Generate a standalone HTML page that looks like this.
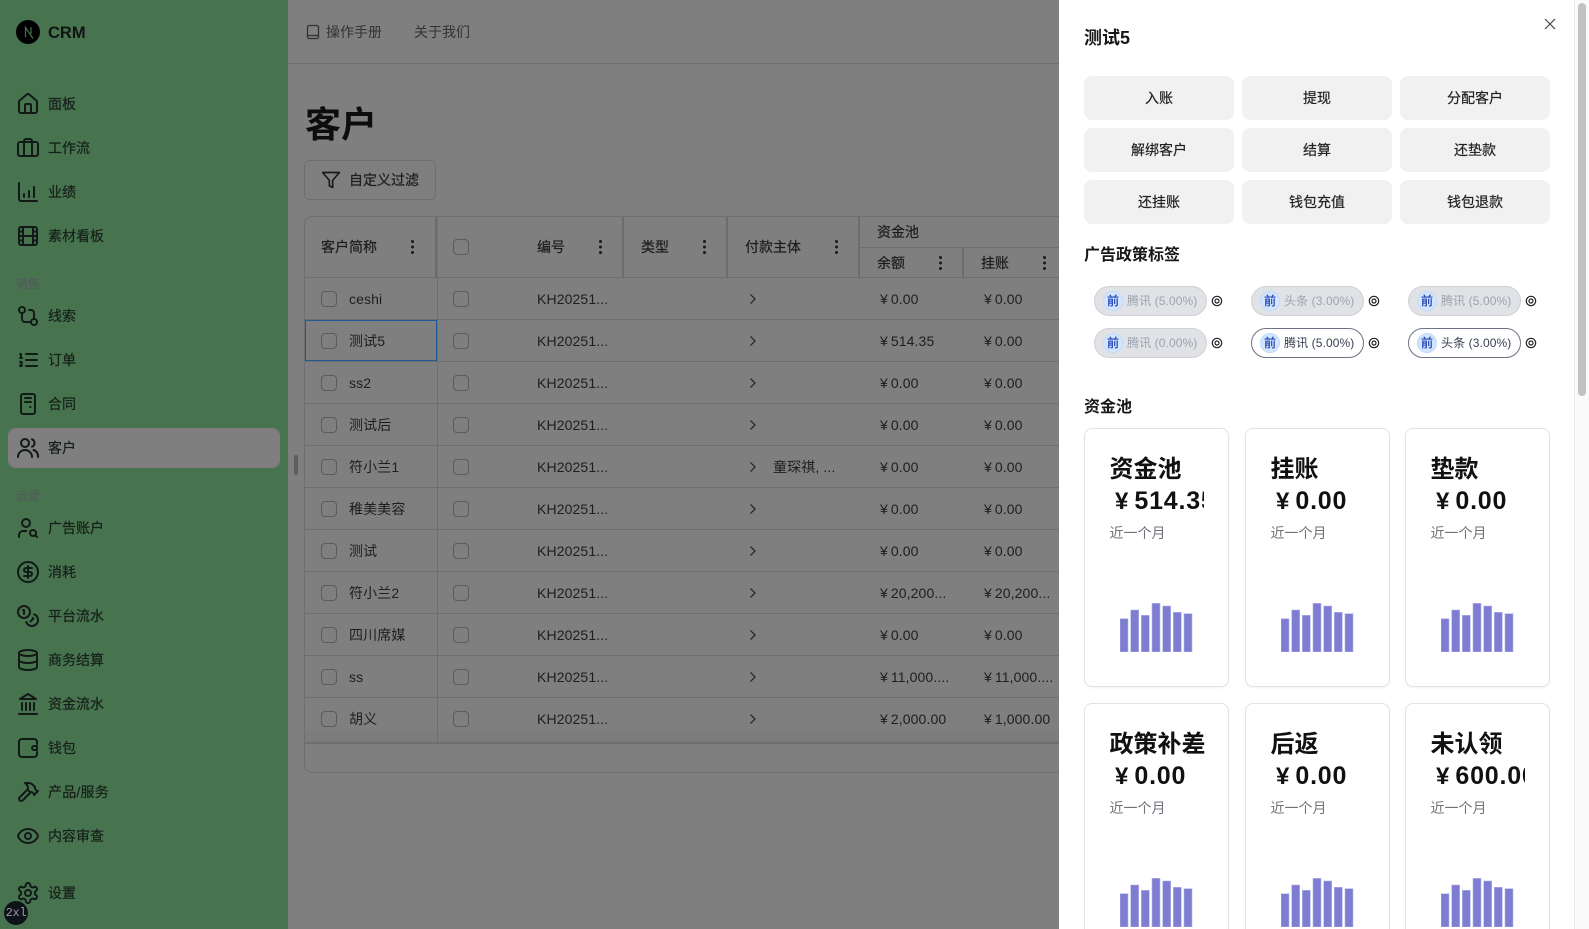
<!DOCTYPE html>
<html lang="zh"><head><meta charset="utf-8"><title>CRM</title>
<style>
*{box-sizing:border-box}
html,body{margin:0;padding:0;width:1589px;height:929px;overflow:hidden;background:#7f7f7f}
body{font-family:"Liberation Sans","Noto Sans CJK SC",sans-serif;position:relative;color:#1c1c1c;font-size:14px}
.a{position:absolute;white-space:nowrap}
.nav{position:absolute;left:48px;font-size:14px;line-height:20px;color:#15201a;-webkit-text-stroke:.2px currentColor;white-space:nowrap}
.ic{position:absolute;left:16px;width:24px;height:24px;fill:none;stroke:#121a18;stroke-width:2;stroke-linecap:round;stroke-linejoin:round}
.lb{position:absolute;left:16px;font-size:12px;line-height:16px;color:#4f5a5a}
.h{position:absolute;background:#6c6c6c}
.hl{position:absolute;left:305px;width:754px;height:1px;background:#6e6e6e}
.th{position:absolute;font-size:14px;line-height:20px;-webkit-text-stroke:.2px currentColor;color:#1c1c1c;white-space:nowrap}
.k{position:absolute;width:3px;height:14px;background:radial-gradient(circle at 1.5px 1.5px,#1c1c1c 1.4px,transparent 1.6px) 0 0/3px 5.5px}
.cb{position:absolute;width:16px;height:16px;border:1px solid #5c5c5c;border-radius:4px}
.t{position:absolute;font-size:14px;line-height:20px;color:#1e1e1e;white-space:nowrap;letter-spacing:.12px}
.ch{position:absolute;left:749px;width:8px;height:12px;fill:none;stroke:#1e1e1e;stroke-width:1.2}
#dr{position:absolute;left:1059px;top:0;width:530px;height:929px;background:#fff;overflow:hidden}
.btn{position:absolute;width:150px;height:44px;background:#f1f1f1;border-radius:8px;text-align:center;line-height:44px;font-size:14px;-webkit-text-stroke:.2px currentColor;color:#222}
.sec{position:absolute;left:25px;font-size:16px;line-height:24px;font-weight:700;color:#18181b}
.chip{position:absolute;width:113px;height:30px;border-radius:15px;border:1px solid #cfd1d6;background:#e1e2e6;font-size:12px;line-height:28px;color:#9ca3af;padding-left:32px;white-space:nowrap;letter-spacing:.1px}
.chip.on{background:#fff;border-color:#6b7280;color:#374151}
.chip i{position:absolute;left:8px;top:4px;width:20px;height:20px;border-radius:50%;background:#d3e4fd;border:1px solid #bfdbfe;color:#1e40af;font-style:normal;text-align:center;line-height:18px;font-size:12px;-webkit-text-stroke:.25px currentColor;letter-spacing:0}
.tg{position:absolute;width:12px;height:12px;fill:none;stroke:#222;stroke-width:1.2}
.card{position:absolute;width:145px;height:259px;border:1px solid #e2e2e2;border-radius:8px;background:#fff;box-shadow:0 1px 2px rgba(0,0,0,.05)}
.ct{position:absolute;left:24.5px;top:25px;font-size:24px;line-height:32px;font-weight:700;color:#111;white-space:nowrap}
.cv{position:absolute;left:25px;top:56px;width:94px;overflow:hidden;font-size:25px;line-height:32px;font-weight:700;color:#111;white-space:nowrap;padding-left:5px;letter-spacing:.8px}
.cv b{font-size:24px;font-weight:700;margin-right:6px;letter-spacing:0}
.cs{position:absolute;left:24.5px;top:94px;font-size:14px;line-height:20px;color:#71717a;white-space:nowrap}
.bars{position:absolute;top:173px;width:73px;height:50px}
</style></head><body>
<svg width="0" height="0" style="position:absolute"><defs>
<symbol id="br" viewBox="0 0 73 50"><g fill="#7d7dd2" stroke="#b4b4e8" stroke-width=".6"><rect x="0" y="16.7" width="8" height="33.3"/><rect x="10.7" y="8" width="8" height="42"/><rect x="21.3" y="13.3" width="8" height="36.7"/><rect x="32" y="1.3" width="8" height="48.7"/><rect x="42.7" y="4" width="8" height="46"/><rect x="53.3" y="10.3" width="8" height="39.7"/><rect x="64" y="11.7" width="8" height="38.3"/></g></symbol>
<symbol id="tg" viewBox="0 0 12 12"><circle cx="6" cy="6" r="4.7"/><circle cx="6" cy="6" r="2"/></symbol>
</defs></svg>

<!-- sidebar -->
<div class="a" style="left:0;top:0;width:288px;height:929px;background:#48734f"></div>
<div class="a" style="left:16px;top:20px;width:24px;height:24px;border-radius:50%;background:#000"></div>
<svg class="a" style="left:16px;top:20px" width="24" height="24" fill="none" stroke="#48734f" stroke-width="1.2"><path d="M9.500 17V7.500L17 18.500M15 7v7"/></svg>
<div class="a" style="left:48px;top:22px;font-size:16.500px;line-height:22px;font-weight:700;color:#101512">CRM</div>
<div class="a" style="left:8px;top:428px;width:272px;height:40px;border-radius:8px;background:#7f7f7f"></div>

<svg class="ic" style="top:92px" viewBox="0 0 24 24"><path d="M15 21v-8a1 1 0 0 0-1-1h-4a1 1 0 0 0-1 1v8"/><path d="M3 10a2 2 0 0 1 .709-1.528l7-5.999a2 2 0 0 1 2.582 0l7 5.999A2 2 0 0 1 21 10v9a2 2 0 0 1-2 2H5a2 2 0 0 1-2-2z"/></svg><div class="nav" style="top:94px">面板</div>
<svg class="ic" style="top:136px" viewBox="0 0 24 24"><path d="M16 20V5a2 2 0 0 0-2-2h-4a2 2 0 0 0-2 2v15"/><rect width="20" height="14" x="2" y="6" rx="2"/></svg><div class="nav" style="top:138px">工作流</div>
<svg class="ic" style="top:180px" viewBox="0 0 24 24"><path d="M3 3v16a2 2 0 0 0 2 2h16"/><path d="M18 17V7"/><path d="M13 17v-6"/><path d="M8 17v-3"/></svg><div class="nav" style="top:182px">业绩</div>
<svg class="ic" style="top:224px" viewBox="0 0 24 24"><rect width="18" height="18" x="3" y="3" rx="2"/><path d="M7 3v18"/><path d="M3 7.500h4"/><path d="M3 12h18"/><path d="M3 16.500h4"/><path d="M17 3v18"/><path d="M17 7.500h4"/><path d="M17 16.500h4"/></svg><div class="nav" style="top:226px">素材看板</div>
<div class="lb" style="top:276px">销售</div>
<svg class="ic" style="top:304px" viewBox="0 0 24 24"><circle cx="6" cy="6" r="3"/><circle cx="18" cy="18" r="3"/><path d="M6 9v6a3 3 0 0 0 3 3h6"/><path d="M13 6h2a3 3 0 0 1 3 3v6"/></svg><div class="nav" style="top:306px">线索</div>
<svg class="ic" style="top:348px" viewBox="0 0 24 24"><path d="M10 12h11"/><path d="M10 18h11"/><path d="M10 6h11"/><path d="M4 10h2"/><path d="M4 6h1v4"/><path d="M6 18H4c0-1 2-2 2-3s-1-1.500-2-1"/></svg><div class="nav" style="top:350px">订单</div>
<svg class="ic" style="top:392px" viewBox="0 0 24 24"><rect x="5" y="2" width="14" height="20" rx="2"/><path d="M9 6h6"/><path d="M9 10h6"/><path d="M14 15h.5"/></svg><div class="nav" style="top:394px">合同</div>
<svg class="ic" style="top:436px" viewBox="0 0 24 24"><circle cx="9" cy="7" r="4"/><path d="M2 21a7 7 0 0 1 14 0"/><path d="M16 3.300a4 4 0 0 1 0 7.400"/><path d="M17.500 14a6.500 6.500 0 0 1 4.500 7"/></svg><div class="nav" style="top:438px">客户</div>
<div class="lb" style="top:488px">运营</div>
<svg class="ic" style="top:516px" viewBox="0 0 24 24"><circle cx="10" cy="7" r="4"/><path d="M10.300 15H7a4 4 0 0 0-4 4v2"/><circle cx="17" cy="17" r="3"/><path d="m21 21-1.900-1.900"/></svg><div class="nav" style="top:518px">广告账户</div>
<svg class="ic" style="top:560px" viewBox="0 0 24 24"><circle cx="12" cy="12" r="10"/><path d="M16 8h-6a2 2 0 1 0 0 4h4a2 2 0 1 1 0 4H8"/><path d="M12 18V6"/></svg><div class="nav" style="top:562px">消耗</div>
<svg class="ic" style="top:604px" viewBox="0 0 24 24"><circle cx="8" cy="8" r="6"/><path d="M18.090 10.370A6 6 0 1 1 10.340 18"/><path d="M7 6h1v4"/><path d="m16.710 13.880.7.71-2.820 2.820"/></svg><div class="nav" style="top:606px">平台流水</div>
<svg class="ic" style="top:648px" viewBox="0 0 24 24"><ellipse cx="12" cy="5" rx="9" ry="3"/><path d="M3 5V19A9 3 0 0 0 21 19V5"/><path d="M3 12A9 3 0 0 0 21 12"/></svg><div class="nav" style="top:650px">商务结算</div>
<svg class="ic" style="top:692px" viewBox="0 0 24 24"><path d="M3 22h18"/><path d="M6 18v-7"/><path d="M10 18v-7"/><path d="M14 18v-7"/><path d="M18 18v-7"/><path d="M12 2l8 5H4z"/></svg><div class="nav" style="top:694px">资金流水</div>
<svg class="ic" style="top:736px" viewBox="0 0 24 24"><path d="M21 8V6a3 3 0 0 0-3-3H6a3 3 0 0 0-3 3v12a3 3 0 0 0 3 3h12a3 3 0 0 0 3-3v-2"/><path d="M21 10h-3a2 2 0 0 0 0 4h3z"/></svg><div class="nav" style="top:738px">钱包</div>
<svg class="ic" style="top:780px" viewBox="0 0 24 24"><path d="m15 12-8.373 8.373a1 1 0 1 1-3-3L12 9"/><path d="m18 15 4-4"/><path d="m21.500 11.500-1.914-1.914A2 2 0 0 1 19 8.172V7l-2.260-2.260a6 6 0 0 0-4.202-1.756L9 2.960l.92.82A6.180 6.180 0 0 1 12 8.400V10l2 2h1.172a2 2 0 0 1 1.414.586L18.500 14.500"/></svg><div class="nav" style="top:782px;letter-spacing:.2px">产品/服务</div>
<svg class="ic" style="top:824px" viewBox="0 0 24 24"><path d="M2.062 12.348a1 1 0 0 1 0-.696 10.750 10.750 0 0 1 19.876 0 1 1 0 0 1 0 .696 10.750 10.750 0 0 1-19.876 0"/><circle cx="12" cy="12" r="3"/></svg><div class="nav" style="top:826px">内容审查</div>
<svg class="ic" style="top:881px" viewBox="0 0 24 24"><path d="M12.220 2h-.44a2 2 0 0 0-2 2v.18a2 2 0 0 1-1 1.730l-.43.25a2 2 0 0 1-2 0l-.15-.08a2 2 0 0 0-2.730.73l-.22.38a2 2 0 0 0 .73 2.730l.15.1a2 2 0 0 1 1 1.720v.51a2 2 0 0 1-1 1.740l-.15.09a2 2 0 0 0-.73 2.730l.22.38a2 2 0 0 0 2.730.73l.15-.08a2 2 0 0 1 2 0l.43.25a2 2 0 0 1 1 1.730V20a2 2 0 0 0 2 2h.44a2 2 0 0 0 2-2v-.18a2 2 0 0 1 1-1.730l.43-.25a2 2 0 0 1 2 0l.15.08a2 2 0 0 0 2.730-.73l.22-.39a2 2 0 0 0-.73-2.730l-.15-.08a2 2 0 0 1-1-1.740v-.5a2 2 0 0 1 1-1.740l.15-.09a2 2 0 0 0 .73-2.730l-.22-.38a2 2 0 0 0-2.730-.73l-.15.08a2 2 0 0 1-2 0l-.43-.25a2 2 0 0 1-1-1.730V4a2 2 0 0 0-2-2z"/><circle cx="12" cy="12" r="3"/></svg><div class="nav" style="top:883px">设置</div>
<div class="a" style="left:4px;top:901px;width:24px;height:24px;border-radius:50%;background:#10121a;color:#9a9aa0;font-family:'Liberation Mono',monospace;font-size:12px;line-height:24px;text-align:center;letter-spacing:-.3px">2xl</div>

<!-- resize handle -->
<div class="a" style="left:294px;top:455px;width:4px;height:20px;border-radius:2px;background:#5e5e5e"></div>

<!-- top bar -->
<div class="a" style="left:288px;top:63px;width:771px;height:1px;background:#6e6e6e"></div>
<svg class="a" style="left:305px;top:23px" width="18" height="18" viewBox="0 0 18 18" fill="none" stroke="#333" stroke-width="1.300" stroke-linejoin="round"><rect x="2.500" y="2.500" width="11" height="13" rx="1.500"/><path d="M2.500 12.500h11"/></svg>
<div class="a" style="left:326px;top:22px;font-size:14px;line-height:20px;color:#333">操作手册</div>
<div class="a" style="left:414px;top:22px;font-size:14px;line-height:20px;color:#333">关于我们</div>

<div class="a" style="left:305px;top:100px;font-size:36px;line-height:50px;font-weight:700;color:#0d0d0d">客户</div>

<div class="a" style="left:304px;top:160px;width:132px;height:40px;border:1px solid #6e6e6e;border-radius:6px"></div>
<svg class="a" style="left:321px;top:170px" width="20" height="20" viewBox="0 0 24 24" fill="none" stroke="#1a1a1a" stroke-width="2" stroke-linejoin="round"><polygon points="22 3 2 3 10 12.460 10 19 14 21 14 12.460 22 3"/></svg>
<div class="a" style="left:349px;top:170px;font-size:14px;line-height:20px;-webkit-text-stroke:.2px currentColor;color:#1c1c1c">自定义过滤</div>

<!-- table frame -->
<div class="a" style="left:304px;top:216px;width:770px;height:557px;border:1px solid #6e6e6e;border-radius:8px"></div>
<div class="a" style="left:305px;top:731px;width:754px;height:11px;background:#7c7c7c"></div>
<div class="hl" style="top:277px"></div>
<div class="hl" style="top:319px"></div><div class="hl" style="top:361px"></div><div class="hl" style="top:403px"></div><div class="hl" style="top:445px"></div><div class="hl" style="top:487px"></div><div class="hl" style="top:529px"></div><div class="hl" style="top:571px"></div><div class="hl" style="top:613px"></div><div class="hl" style="top:655px"></div><div class="hl" style="top:697px"></div><div class="hl" style="top:742px;height:2px"></div>
<div class="a" style="left:437px;top:277px;width:1px;height:465px;background:#6e6e6e"></div>
<!-- header dividers -->
<div class="h" style="left:434.500px;top:217px;width:2px;height:60px"></div><div class="h" style="left:436.500px;top:217px;width:1px;height:60px;background:#737373"></div>
<div class="h" style="left:622px;top:217px;width:2px;height:60px"></div>
<div class="h" style="left:726px;top:217px;width:2px;height:60px"></div>
<div class="h" style="left:858px;top:217px;width:2px;height:60px"></div>
<div class="h" style="left:962px;top:248px;width:2px;height:29px"></div>
<div class="hl" style="left:860px;width:199px;top:247px"></div>
<div class="th" style="left:321px;top:237px">客户简称</div><div class="k" style="left:411px;top:240px"></div>
<div class="cb" style="left:453px;top:239px"></div>
<div class="th" style="left:537px;top:237px">编号</div><div class="k" style="left:599px;top:240px"></div>
<div class="th" style="left:641px;top:237px">类型</div><div class="k" style="left:703px;top:240px"></div>
<div class="th" style="left:745px;top:237px">付款主体</div><div class="k" style="left:835px;top:240px"></div>
<div class="th" style="left:877px;top:222px">资金池</div>
<div class="th" style="left:877px;top:253px">余额</div><div class="k" style="left:939px;top:256px"></div>
<div class="th" style="left:981px;top:253px">挂账</div><div class="k" style="left:1043px;top:256px"></div>
<!-- selected cell -->
<div class="a" style="left:305px;top:320px;width:132px;height:41px;border:1px solid #1f5a99"></div>

<!-- rows -->
<div class="cb" style="left:321px;top:291px"></div><div class="t" style="left:349px;top:289px">ceshi</div><div class="cb" style="left:453px;top:291px"></div><div class="t" style="left:537px;top:289px">KH20251...</div><svg class="ch" style="top:293px" viewBox="0 0 8 12"><path d="M1.500 1.500 6 6l-4.500 4.500"/></svg><div class="t" style="left:880px;top:289px">¥&#8201;0.00</div><div class="t" style="left:984px;top:289px">¥&#8201;0.00</div>
<div class="cb" style="left:321px;top:333px"></div><div class="t" style="left:349px;top:331px">测试5</div><div class="cb" style="left:453px;top:333px"></div><div class="t" style="left:537px;top:331px">KH20251...</div><svg class="ch" style="top:335px" viewBox="0 0 8 12"><path d="M1.500 1.500 6 6l-4.500 4.500"/></svg><div class="t" style="left:880px;top:331px">¥&#8201;514.35</div><div class="t" style="left:984px;top:331px">¥&#8201;0.00</div>
<div class="cb" style="left:321px;top:375px"></div><div class="t" style="left:349px;top:373px">ss2</div><div class="cb" style="left:453px;top:375px"></div><div class="t" style="left:537px;top:373px">KH20251...</div><svg class="ch" style="top:377px" viewBox="0 0 8 12"><path d="M1.500 1.500 6 6l-4.500 4.500"/></svg><div class="t" style="left:880px;top:373px">¥&#8201;0.00</div><div class="t" style="left:984px;top:373px">¥&#8201;0.00</div>
<div class="cb" style="left:321px;top:417px"></div><div class="t" style="left:349px;top:415px">测试后</div><div class="cb" style="left:453px;top:417px"></div><div class="t" style="left:537px;top:415px">KH20251...</div><svg class="ch" style="top:419px" viewBox="0 0 8 12"><path d="M1.500 1.500 6 6l-4.500 4.500"/></svg><div class="t" style="left:880px;top:415px">¥&#8201;0.00</div><div class="t" style="left:984px;top:415px">¥&#8201;0.00</div>
<div class="cb" style="left:321px;top:459px"></div><div class="t" style="left:349px;top:457px">符小兰1</div><div class="cb" style="left:453px;top:459px"></div><div class="t" style="left:537px;top:457px">KH20251...</div><svg class="ch" style="top:461px" viewBox="0 0 8 12"><path d="M1.500 1.500 6 6l-4.500 4.500"/></svg><div class="t" style="left:773px;top:457px">童琛祺, ...</div><div class="t" style="left:880px;top:457px">¥&#8201;0.00</div><div class="t" style="left:984px;top:457px">¥&#8201;0.00</div>
<div class="cb" style="left:321px;top:501px"></div><div class="t" style="left:349px;top:499px">稚美美容</div><div class="cb" style="left:453px;top:501px"></div><div class="t" style="left:537px;top:499px">KH20251...</div><svg class="ch" style="top:503px" viewBox="0 0 8 12"><path d="M1.500 1.500 6 6l-4.500 4.500"/></svg><div class="t" style="left:880px;top:499px">¥&#8201;0.00</div><div class="t" style="left:984px;top:499px">¥&#8201;0.00</div>
<div class="cb" style="left:321px;top:543px"></div><div class="t" style="left:349px;top:541px">测试</div><div class="cb" style="left:453px;top:543px"></div><div class="t" style="left:537px;top:541px">KH20251...</div><svg class="ch" style="top:545px" viewBox="0 0 8 12"><path d="M1.500 1.500 6 6l-4.500 4.500"/></svg><div class="t" style="left:880px;top:541px">¥&#8201;0.00</div><div class="t" style="left:984px;top:541px">¥&#8201;0.00</div>
<div class="cb" style="left:321px;top:585px"></div><div class="t" style="left:349px;top:583px">符小兰2</div><div class="cb" style="left:453px;top:585px"></div><div class="t" style="left:537px;top:583px">KH20251...</div><svg class="ch" style="top:587px" viewBox="0 0 8 12"><path d="M1.500 1.500 6 6l-4.500 4.500"/></svg><div class="t" style="left:880px;top:583px">¥&#8201;20,200...</div><div class="t" style="left:984px;top:583px">¥&#8201;20,200...</div>
<div class="cb" style="left:321px;top:627px"></div><div class="t" style="left:349px;top:625px">四川席媒</div><div class="cb" style="left:453px;top:627px"></div><div class="t" style="left:537px;top:625px">KH20251...</div><svg class="ch" style="top:629px" viewBox="0 0 8 12"><path d="M1.500 1.500 6 6l-4.500 4.500"/></svg><div class="t" style="left:880px;top:625px">¥&#8201;0.00</div><div class="t" style="left:984px;top:625px">¥&#8201;0.00</div>
<div class="cb" style="left:321px;top:669px"></div><div class="t" style="left:349px;top:667px">ss</div><div class="cb" style="left:453px;top:669px"></div><div class="t" style="left:537px;top:667px">KH20251...</div><svg class="ch" style="top:671px" viewBox="0 0 8 12"><path d="M1.500 1.500 6 6l-4.500 4.500"/></svg><div class="t" style="left:880px;top:667px">¥&#8201;11,000....</div><div class="t" style="left:984px;top:667px">¥&#8201;11,000....</div>
<div class="cb" style="left:321px;top:711px"></div><div class="t" style="left:349px;top:709px">胡义</div><div class="cb" style="left:453px;top:711px"></div><div class="t" style="left:537px;top:709px">KH20251...</div><svg class="ch" style="top:713px" viewBox="0 0 8 12"><path d="M1.500 1.500 6 6l-4.500 4.500"/></svg><div class="t" style="left:880px;top:709px">¥&#8201;2,000.00</div><div class="t" style="left:984px;top:709px">¥&#8201;1,000.00</div>

<!-- drawer -->
<div id="dr">
<div class="a" style="left:25px;top:25px;font-size:18px;line-height:26px;font-weight:700;color:#18181b">测试5</div>
<svg class="a" style="left:484px;top:17px" width="14" height="14" viewBox="0 0 14 14" fill="none" stroke="#444" stroke-width="1.200"><path d="M2 2l10 10M12 2 2 12"/></svg>

<div class="btn" style="left:25px;top:76px">入账</div><div class="btn" style="left:183px;top:76px">提现</div><div class="btn" style="left:341px;top:76px">分配客户</div>
<div class="btn" style="left:25px;top:128px">解绑客户</div><div class="btn" style="left:183px;top:128px">结算</div><div class="btn" style="left:341px;top:128px">还垫款</div>
<div class="btn" style="left:25px;top:180px">还挂账</div><div class="btn" style="left:183px;top:180px">钱包充值</div><div class="btn" style="left:341px;top:180px">钱包退款</div>

<div class="sec" style="top:244px">广告政策标签</div>
<div class="chip" style="left:35px;top:286px"><i>前</i>腾讯 (5.00%)</div><svg class="tg" style="left:152px;top:295px"><use href="#tg"/></svg>
<div class="chip" style="left:192px;top:286px"><i>前</i>头条 (3.00%)</div><svg class="tg" style="left:309px;top:295px"><use href="#tg"/></svg>
<div class="chip" style="left:349px;top:286px"><i>前</i>腾讯 (5.00%)</div><svg class="tg" style="left:466px;top:295px"><use href="#tg"/></svg>
<div class="chip" style="left:35px;top:328px"><i>前</i>腾讯 (0.00%)</div><svg class="tg" style="left:152px;top:337px"><use href="#tg"/></svg>
<div class="chip on" style="left:192px;top:328px"><i>前</i>腾讯 (5.00%)</div><svg class="tg" style="left:309px;top:337px"><use href="#tg"/></svg>
<div class="chip on" style="left:349px;top:328px"><i>前</i>头条 (3.00%)</div><svg class="tg" style="left:466px;top:337px"><use href="#tg"/></svg>

<div class="sec" style="top:395.500px">资金池</div>

<div class="card" style="left:25px;top:428px"><div class="ct">资金池</div><div class="cv"><b>¥</b>514.35</div><div class="cs">近一个月</div><svg class="bars" style="left:35px"><use href="#br"/></svg></div>
<div class="card" style="left:186px;top:428px"><div class="ct">挂账</div><div class="cv"><b>¥</b>0.00</div><div class="cs">近一个月</div><svg class="bars" style="left:35px"><use href="#br"/></svg></div>
<div class="card" style="left:346px;top:428px"><div class="ct">垫款</div><div class="cv"><b>¥</b>0.00</div><div class="cs">近一个月</div><svg class="bars" style="left:35px"><use href="#br"/></svg></div>
<div class="card" style="left:25px;top:703px"><div class="ct">政策补差</div><div class="cv"><b>¥</b>0.00</div><div class="cs">近一个月</div><svg class="bars" style="left:35px"><use href="#br"/></svg></div>
<div class="card" style="left:186px;top:703px"><div class="ct">后返</div><div class="cv"><b>¥</b>0.00</div><div class="cs">近一个月</div><svg class="bars" style="left:35px"><use href="#br"/></svg></div>
<div class="card" style="left:346px;top:703px"><div class="ct">未认领</div><div class="cv"><b>¥</b>600.00</div><div class="cs">近一个月</div><svg class="bars" style="left:35px"><use href="#br"/></svg></div>

<!-- scrollbar -->
<div class="a" style="left:515px;top:0;width:15px;height:929px;background:#fafafa;border-left:1px solid #ececec"></div>
<div class="a" style="left:519px;top:3px;width:8px;height:393px;border-radius:4px;background:#c1c1c1"></div>
</div>
</body></html>
